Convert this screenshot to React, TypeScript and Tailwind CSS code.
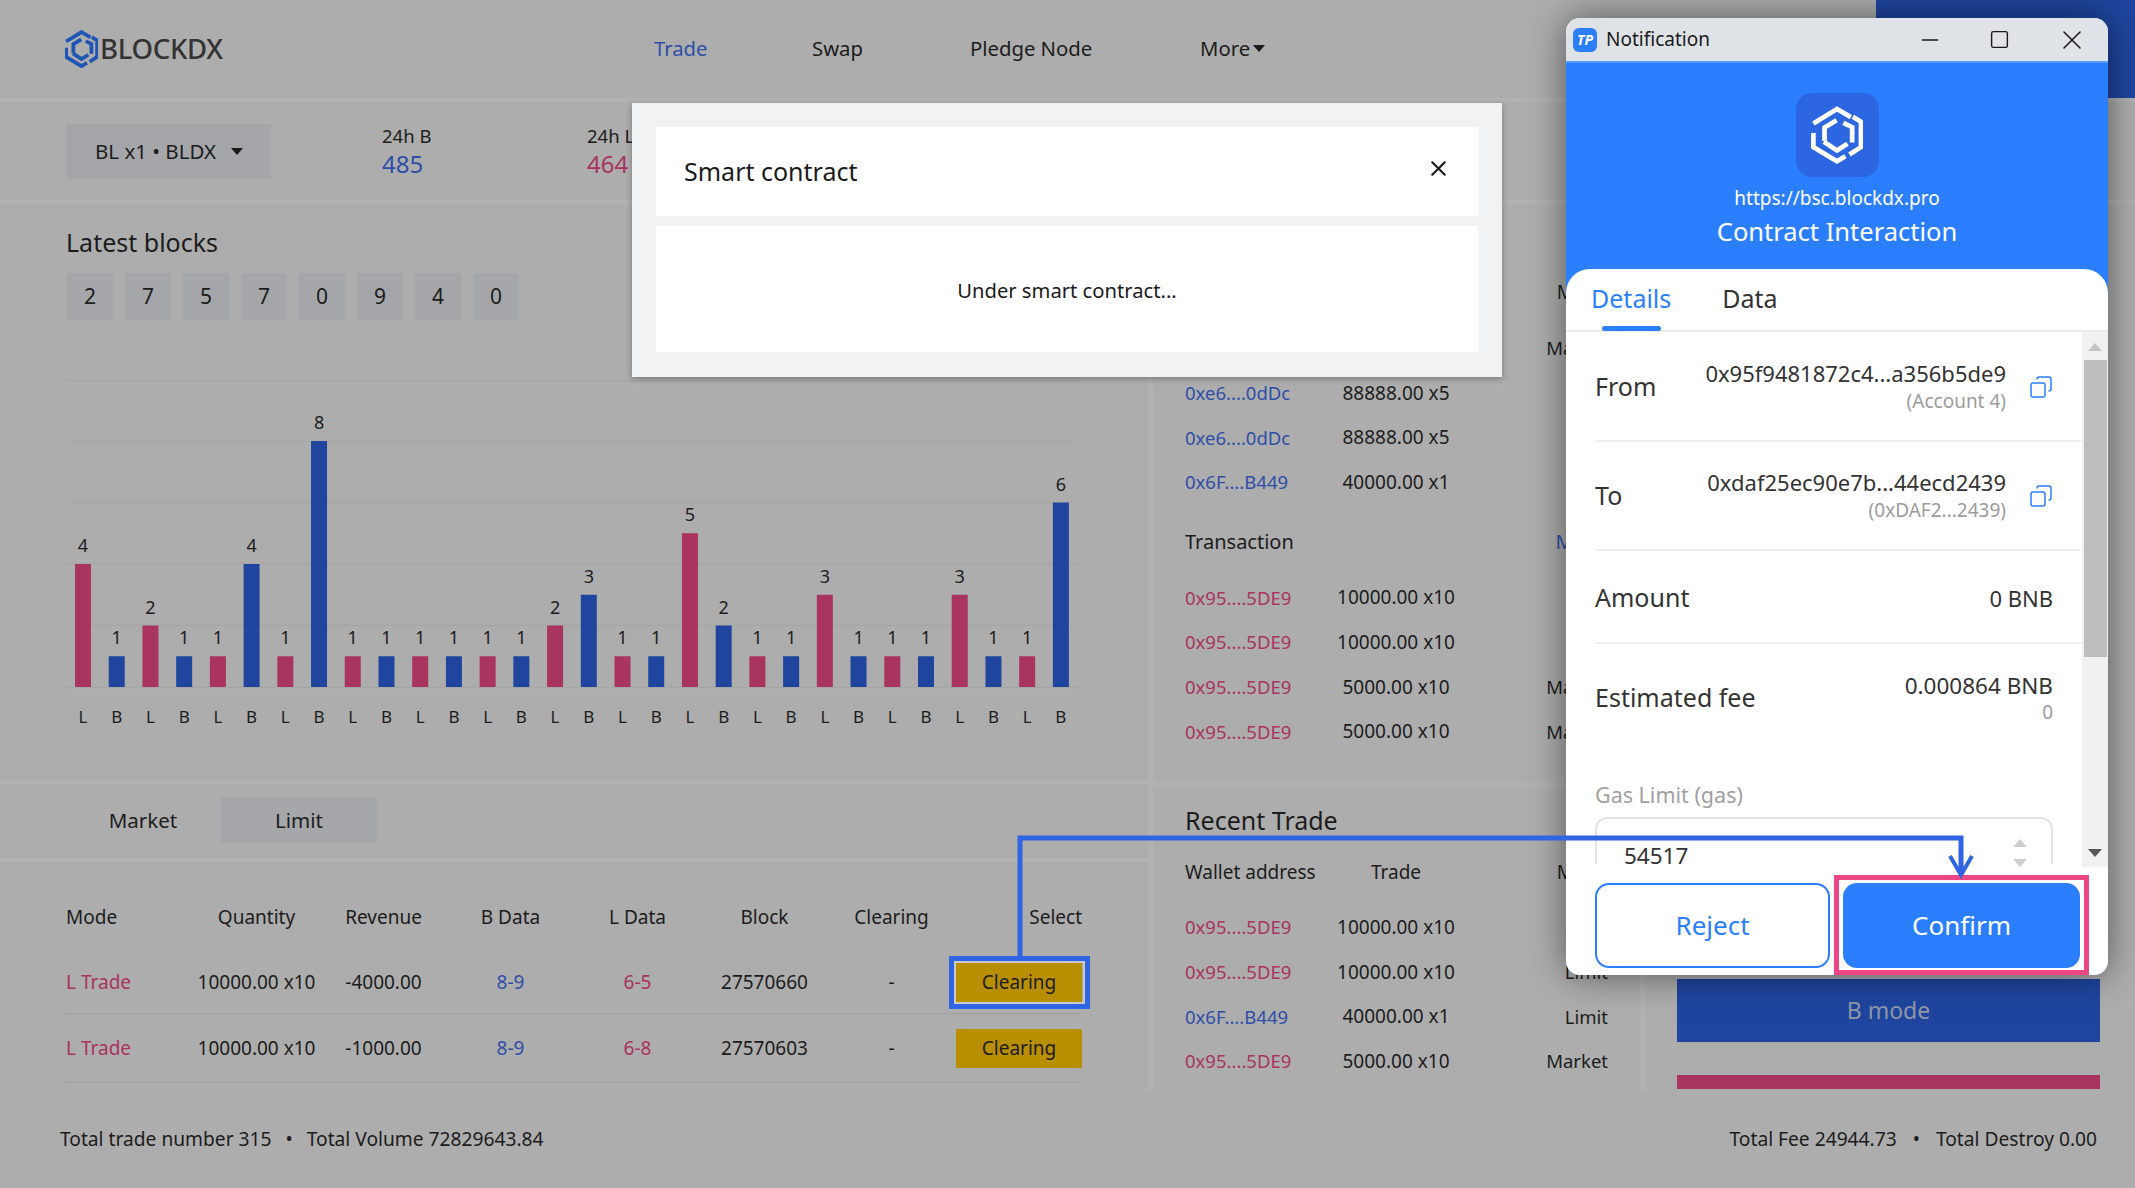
import { Copy, Minus, Square, X } from "lucide-react";

const FONT = "font-['Noto_Sans','Open_Sans',sans-serif]";

const Logo = ({ className, weight = 14 }: { className: string; weight?: number }) => (
  <svg viewBox="0 0 150 172" className={className} fill="none" stroke="currentColor" strokeWidth={weight}>
    <path d="M5 52 L75 9 L116 33" />
    <path d="M122 32 L146 47 L146 122 L112 144" />
    <path d="M5 80 L5 122 L75 164 L100 149" />
    <path d="M38 104 L38 64 L74 42" />
    <path d="M94 50 L120 63 L120 108" />
    <path d="M36 106 L75 132 L106 112" />
  </svg>
);

const Caret = () => (
  <span className="inline-block w-0 h-0 border-x-[6px] border-x-transparent border-t-[7px] border-t-[#1a1a1a]" />
);

const blocks = ["2", "7", "5", "7", "0", "9", "4", "0"];
const bars = [4, 1, 2, 1, 1, 4, 1, 8, 1, 1, 1, 1, 1, 1, 2, 3, 1, 1, 5, 2, 1, 1, 3, 1, 1, 1, 3, 1, 1, 6];

const Chart = () => (
  <svg width="1012" height="350" className="block">
    {[0, 61, 122, 183, 245, 307].map((y) => (
      <line key={y} x1="0" x2="1012" y1={y + 0.5} y2={y + 0.5} stroke="#a6a6a6" strokeWidth="1.5" />
    ))}
    {bars.map((v, i) => {
      const x = 9 + i * 33.72;
      const h = v * 30.75;
      const isL = i % 2 === 0;
      return (
        <g key={i}>
          <rect x={x} y={307 - h} width="16" height={h} fill={isL ? "#a8345f" : "#1f459f"} />
          <text x={x + 8} y={307 - h - 12} textAnchor="middle" fontSize="18" fill="#1c1c1c">
            {v}
          </text>
          <text x={x + 8} y={343} textAnchor="middle" fontSize="17" fill="#1c1c1c">
            {isL ? "L" : "B"}
          </text>
        </g>
      );
    })}
  </svg>
);

const tradeRows = [
  { qty: "10000.00 x10", rev: "-4000.00", b: "8-9", l: "6-5", block: "27570660", rowClass: "h-[63px]" },
  { qty: "10000.00 x10", rev: "-1000.00", b: "8-9", l: "6-8", block: "27570603", rowClass: "h-[68px]" },
];

const pink = "text-[#a8345f]";
const blue = "text-[#2f4ea8]";

const OrderRow = ({ addr, trade, mode, isBuy }: { addr?: string; trade?: string; mode: string; isBuy?: boolean }) => (
  <div className="grid grid-cols-[134px_154px_1fr] items-center h-[44.6px] whitespace-nowrap text-[18.5px]">
    <span className={isBuy ? blue : pink}>{addr}</span>
    <span className="text-center text-[19px] text-[#1c1c1c]">{trade}</span>
    <span className="text-right text-[#1c1c1c]">{mode}</span>
  </div>
);

const Triangle = ({ up, className }: { up?: boolean; className: string }) => (
  <span
    className={`block w-0 h-0 border-x-[7px] border-x-transparent ${
      up ? "border-b-[8px]" : "border-t-[8px]"
    } ${className}`}
  />
);

const Notification = () => (
  <div className="absolute left-[1566px] top-[18px] w-[542px] h-[957px] rounded-[14px] overflow-hidden flex flex-col bg-white shadow-[0_0_36px_rgba(0,0,0,0.5)]">
    <div className="h-[43px] shrink-0 bg-[#dfe2e6] flex items-center pl-[7px] text-[#1a1a1a]">
      <span className="w-[24px] h-[24px] shrink-0 rounded-[6px] bg-[#2b7fff] text-white text-[14px] font-bold italic flex items-center justify-center">
        TP
      </span>
      <span className="ml-[9px] w-[311px] shrink-0 text-[19px]">Notification</span>
      <Minus size={26} strokeWidth={1.5} className="shrink-0" />
      <Square size={21} strokeWidth={1.6} className="ml-[46px] shrink-0" />
      <X size={32} strokeWidth={1.2} className="ml-[46px] shrink-0" />
    </div>
    <div className="h-[208px] shrink-0 bg-[#2b7fff] border-t-2 border-[#5b9dff] flex flex-col items-center text-white">
      <div className="mt-[30px] w-[83px] h-[84px] rounded-[16px] bg-[#2c66e0] flex items-center justify-center">
        <Logo className="w-[52px] h-[58px] text-white" />
      </div>
      <div className="mt-[7px] h-[28px] leading-[28px] text-[19px]">https://bsc.blockdx.pro</div>
      <div className="h-[38px] leading-[38px] text-[25.5px]">Contract Interaction</div>
    </div>
    <div className="flex-1 min-h-0 bg-[#2b7fff]">
      <div className="h-full bg-white rounded-t-[24px] flex flex-col">
        <div className="h-[63px] shrink-0 border-b-2 border-[#ececec] relative flex items-center pl-[25px] pb-[2px] text-[25px]">
          <span className="text-[#2b7fff]">Details</span>
          <span className="ml-[51px] text-[#333]">Data</span>
          <span className="absolute left-[36px] bottom-[-1px] w-[59px] h-[5px] rounded-full bg-[#2b7fff]" />
        </div>
        <div className="h-[535px] shrink-0 flex overflow-hidden">
          <div className="w-[516px] pl-[29px] text-[#333]">
            <div className="h-[110px] pt-[1px] border-b-2 border-[#f0f0f0] flex items-center">
              <span className="text-[25px]">From</span>
              <div className="ml-auto text-right">
                <div className="text-[22px] leading-[28px]">0x95f9481872c4...a356b5de9</div>
                <div className="text-[19px] leading-[28px] text-[#9c9c9c]">(Account 4)</div>
              </div>
              <Copy size={24} strokeWidth={1.5} className="ml-[23px] mr-[29px] shrink-0 text-[#2b7fff] -scale-x-100" />
            </div>
            <div className="h-[109px] pt-[1px] border-b-2 border-[#f0f0f0] flex items-center">
              <span className="text-[25px]">To</span>
              <div className="ml-auto text-right">
                <div className="text-[22px] leading-[28px]">0xdaf25ec90e7b...44ecd2439</div>
                <div className="text-[19px] leading-[28px] text-[#9c9c9c]">(0xDAF2...2439)</div>
              </div>
              <Copy size={24} strokeWidth={1.5} className="ml-[23px] mr-[29px] shrink-0 text-[#2b7fff] -scale-x-100" />
            </div>
            <div className="h-[93px] pt-[3px] border-b-2 border-[#f0f0f0] flex items-center pr-[29px]">
              <span className="text-[25px]">Amount</span>
              <span className="ml-auto text-[22px]">0 BNB</span>
            </div>
            <div className="h-[106px] pt-[2px] flex items-center pr-[29px]">
              <span className="text-[25px]">Estimated fee</span>
              <div className="ml-auto text-right">
                <div className="text-[22.5px] leading-[28px]">0.000864 BNB</div>
                <div className="text-[19px] leading-[24px] text-[#9c9c9c]">0</div>
              </div>
            </div>
            <div className="mt-[31px] text-[21.5px] leading-[28px] text-[#a0a0a0]">Gas Limit (gas)</div>
            <div className="mt-[8px] mr-[29px] h-[47px] border-2 border-b-0 border-[#e4e4e4] rounded-t-[12px] flex items-start pl-[27px] pr-[24px] pt-[29px]">
              <span className="text-[22.5px] leading-[16px]">54517</span>
              <span className="ml-auto -mt-[9px] flex flex-col items-center gap-[12px]">
                <Triangle up className="border-b-[#cfcfcf]" />
                <Triangle className="border-t-[#cfcfcf]" />
              </span>
            </div>
          </div>
          <div className="w-[26px] bg-[#f1f1f1] flex flex-col items-center">
            <Triangle up className="mt-[11px] border-b-[#c4c4c4]" />
            <div className="mt-[9px] w-[23px] h-[297px] bg-[#bdbdbd]" />
            <Triangle className="mt-[192px] border-t-[#555]" />
          </div>
        </div>
        <div className="flex-1 flex pl-[29px] pt-[16px] gap-[13px] text-[26px]">
          <div className="w-[235px] h-[85px] rounded-[14px] border-2 border-[#2b7fff] text-[#2b7fff] flex items-center justify-center">
            Reject
          </div>
          <div className="w-[237px] h-[85px] rounded-[14px] bg-[#2b7fff] text-white flex items-center justify-center">
            Confirm
          </div>
        </div>
      </div>
    </div>
  </div>
);

const Modal = () => (
  <div className="absolute left-[632px] top-[103px] w-[870px] h-[274px] bg-[#f1f2f4] shadow-[0_2px_6px_rgba(0,0,0,0.3)] px-[24px] pt-[24px]">
    <div className="h-[89px] bg-white flex items-center pl-[28px] pr-[27px] text-[25px] text-[#1a1a1a]">
      <span>Smart contract</span>
      <X size={25} strokeWidth={2} className="ml-auto -mt-[6px]" />
    </div>
    <div className="mt-[10px] h-[126px] pt-[2px] bg-white flex items-center justify-center text-[20.2px] text-[#1a1a1a]">
      Under smart contract...
    </div>
  </div>
);

export default function App() {
  return (
    <div className={`relative w-[2135px] h-[1188px] overflow-hidden bg-[#adadad] text-[#1c1c1c] ${FONT}`}>
      {/* top nav */}
      <div className="h-[98px] flex items-center pl-[65px] text-[20.3px]">
        <div className="w-[589px] flex items-center">
          <Logo className="w-[33px] h-[38px] text-[#1f55b5]" weight={17} />
          <span className="ml-[2px] text-[27.5px] font-medium tracking-[-0.3px] text-[#333]">BLOCKDX</span>
        </div>
        <div className="flex items-center pb-[2px]">
          <span className={`w-[158px] ${blue}`}>Trade</span>
          <span className="w-[158px]">Swap</span>
          <span className="w-[230px]">Pledge Node</span>
          <span className="flex items-center gap-[3px]">
            More <Caret />
          </span>
        </div>
        <div className="ml-auto w-[259px] h-full bg-[#1f459f]" />
      </div>
      <div className="h-[4px] bg-[#b2b2b2]" />

      {/* stats row */}
      <div className="h-[98px] flex items-center pl-[66px]">
        <div className="w-[205px] h-[55px] bg-[#a5a6a9] flex items-center pl-[29px] text-[20.5px] gap-[15px]">
          <span>BL x1 • BLDX</span>
          <Caret />
        </div>
        <div className="ml-[111px] w-[205px]">
          <div className="text-[18.5px] leading-[26px]">24h B</div>
          <div className={`text-[24px] leading-[30px] ${blue}`}>485</div>
        </div>
        <div>
          <div className="text-[18.5px] leading-[26px]">24h L</div>
          <div className={`text-[24px] leading-[30px] ${pink}`}>464</div>
        </div>
      </div>
      <div className="h-[4px] bg-[#b2b2b2]" />

      {/* main panels */}
      <div className="h-[886px] flex">
        <div className="w-[1148px] shrink-0">
          <div className="pl-[66px] pt-[21px] h-[69px] text-[25px] leading-[34px]">Latest blocks</div>
          <div className="pl-[67px] flex gap-[12px]">
            {blocks.map((n, i) => (
              <div key={i} className="w-[46px] h-[47px] bg-[#a5a6a9] flex items-center justify-center text-[21px]">
                {n}
              </div>
            ))}
          </div>
          <div className="mt-[60px] ml-[66px]">
            <Chart />
          </div>
          <div className="mt-[50px] h-[4px] bg-[#b2b2b2]" />
          <div className="h-[74px] pl-[65px] pb-[2px] flex items-center text-[20.5px]">
            <div className="w-[156px] h-[46px] flex items-center justify-center">Market</div>
            <div className="w-[156px] h-[46px] bg-[#a5a7aa] flex items-center justify-center">Limit</div>
          </div>
          <div className="h-[4px] bg-[#b2b2b2]" />

          <div className="ml-[66px] w-[1016px] text-[19px] whitespace-nowrap">
            <div className="grid grid-cols-8 items-center text-center h-[90px] pt-[20px]">
              <span className="text-left">Mode</span>
              <span>Quantity</span>
              <span>Revenue</span>
              <span>B Data</span>
              <span>L Data</span>
              <span>Block</span>
              <span>Clearing</span>
              <span className="text-right">Select</span>
            </div>
            {tradeRows.map((row) => (
              <div
                key={row.block}
                className={`grid grid-cols-8 items-center text-center border-b-2 border-[#a6a6a6] ${row.rowClass}`}
              >
                <span className={`text-left ${pink}`}>L Trade</span>
                <span>{row.qty}</span>
                <span>{row.rev}</span>
                <span className={blue}>{row.b}</span>
                <span className={pink}>{row.l}</span>
                <span>{row.block}</span>
                <span>-</span>
                <div className="ml-[1px] h-[39px] bg-[#b88f00] flex items-center justify-center">Clearing</div>
              </div>
            ))}
          </div>
        </div>

        <div className="w-[5px] shrink-0 bg-[#b2b2b2]" />

        <div className="w-[487px] shrink-0">
          <div className="pl-[32px] pr-[32px] pt-[66px] h-[579px]">
            <div className="flex justify-end items-center h-[45px] mb-[11px] text-[19px]">Mode</div>
            <OrderRow mode="Market" />
            <OrderRow isBuy addr="0xe6....0dDc" trade="88888.00 x5" mode="Limit" />
            <OrderRow isBuy addr="0xe6....0dDc" trade="88888.00 x5" mode="Limit" />
            <OrderRow isBuy addr="0x6F....B449" trade="40000.00 x1" mode="Limit" />
            <div className="mt-[15px] mb-[11px] h-[45px] flex items-center justify-between text-[20px]">
              <span>Transaction</span>
              <span className={`pr-[3px] ${blue}`}>More</span>
            </div>
            <OrderRow addr="0x95....5DE9" trade="10000.00 x10" mode="Limit" />
            <OrderRow addr="0x95....5DE9" trade="10000.00 x10" mode="Limit" />
            <OrderRow addr="0x95....5DE9" trade="5000.00 x10" mode="Market" />
            <OrderRow addr="0x95....5DE9" trade="5000.00 x10" mode="Market" />
          </div>
          <div className="h-[4px] bg-[#b2b2b2]" />
          <div className="pl-[32px] pr-[32px]">
            <div className="mt-[14px] h-[40px] flex items-center text-[25px]">Recent Trade</div>
            <div className="mt-[9px] mb-[10px] grid grid-cols-[134px_154px_1fr] items-center h-[45px] text-[19px] whitespace-nowrap">
              <span>Wallet address</span>
              <span className="text-center">Trade</span>
              <span className="text-right">Mode</span>
            </div>
            <OrderRow addr="0x95....5DE9" trade="10000.00 x10" mode="Limit" />
            <OrderRow addr="0x95....5DE9" trade="10000.00 x10" mode="Limit" />
            <OrderRow isBuy addr="0x6F....B449" trade="40000.00 x1" mode="Limit" />
            <OrderRow addr="0x95....5DE9" trade="5000.00 x10" mode="Market" />
          </div>
        </div>

        <div className="w-[5px] shrink-0 bg-[#b2b2b2]" />

        <div className="flex-1 pl-[32px] pr-[35px] flex flex-col justify-end pb-[1px]">
          <div className="h-[63px] bg-[#1f459f] flex items-center justify-center text-[23px] text-[#9097a8]">B mode</div>
          <div className="mt-[33px] h-[14px] bg-[#a8345f]" />
        </div>
      </div>

      {/* footer totals */}
      <div className="h-[98px] flex items-center justify-between pl-[60px] pr-[38px] text-[19.2px]">
        <div className="flex gap-[14px]">
          <span>Total trade number 315</span>
          <span>•</span>
          <span>Total Volume 72829643.84</span>
        </div>
        <div className="flex gap-[16px]">
          <span>Total Fee 24944.73</span>
          <span>•</span>
          <span>Total Destroy 0.00</span>
        </div>
      </div>

      <Modal />
      <Notification />

      {/* annotation layer drawn over the screenshot */}
      <div className="absolute left-[949px] top-[956px] w-[141px] h-[53px] border-[5px] border-[#2f64e3] shadow-[inset_0_0_0_2px_#c9c9c9]" />
      <div className="absolute left-[1834px] top-[875px] w-[255px] h-[100px] border-[5px] border-[#ec4686]" />
      <svg className="absolute left-[1015px] top-[830px]" width="960" height="130" fill="none" stroke="#2f64e3">
        <path d="M5 126 V8 H946 V44" strokeWidth="5" />
        <path d="M935 26 L946 45 L957 26" strokeWidth="4" />
      </svg>
    </div>
  );
}
